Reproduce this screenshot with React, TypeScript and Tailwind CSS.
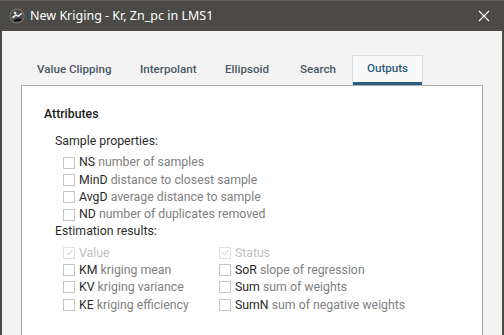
import React from "react";

type Item = { code: string; text: string; disabled?: boolean; checked?: boolean };

const sampleItems: Item[] = [
  { code: "NS", text: "number of samples" },
  { code: "MinD", text: "distance to closest sample" },
  { code: "AvgD", text: "average distance to sample" },
  { code: "ND", text: "number of duplicates removed" },
];

const leftItems: Item[] = [
  { code: "", text: "Value", disabled: true, checked: true },
  { code: "KM", text: "kriging mean" },
  { code: "KV", text: "kriging variance" },
  { code: "KE", text: "kriging efficiency" },
];

const rightItems: Item[] = [
  { code: "", text: "Status", disabled: true, checked: true },
  { code: "SoR", text: "slope of regression" },
  { code: "Sum", text: "sum of weights" },
  { code: "SumN", text: "sum of negative weights" },
];

function Check({ item }: { item: Item }) {
  return (
    <div className="flex h-[17.3px] items-center">
      <span
        className={`flex h-[12px] w-[12px] shrink-0 items-center justify-center border bg-white ${
          item.disabled ? "border-[#e0e0e0]" : "border-[#c4c4c4]"
        }`}
      >
        {item.checked ? (
          <svg width="9" height="9" viewBox="0 0 9 9" fill="none">
            <path d="M1.5 4.5 L3.5 6.8 L7.5 2" stroke="#c8c8c8" strokeWidth="1" />
          </svg>
        ) : null}
      </span>
      <span className="ml-[4px] whitespace-nowrap">
        {item.code ? <span className="text-[#2b2b2b]">{item.code} </span> : null}
        <span className={item.disabled ? "text-[#c0c0c0]" : "text-[#808080]"}>{item.text}</span>
      </span>
    </div>
  );
}

function TitleIcon() {
  return (
    <svg width="16" height="16" viewBox="0 0 16 16">
      <circle cx="8" cy="8" r="7.5" fill="#8a8a8a" />
      <circle cx="8" cy="8" r="6.8" fill="#4a4a4a" />
      <path d="M3 9 L7 6 L9 7.5 L12.5 4.5 L13 6 L9.5 9 L7 8 L4 10.5 Z" fill="#f0f0f0" />
      <path d="M4.5 12.5 Q8 9.5 12.5 11 L11 13.5 Q8 12.5 5.5 14 Z" fill="#0e0e0e" />
      <circle cx="6" cy="5" r="1.3" fill="#e8e8e8" />
    </svg>
  );
}

export default function App() {
  return (
    <div
      className="flex h-[335px] w-[504px] flex-col overflow-hidden bg-[#f3f3f3]"
      style={{ fontFamily: "Roboto, 'Liberation Sans', sans-serif" }}
    >
      <div className="flex h-[31px] shrink-0 items-center border-t border-[#5c5b58] bg-[#4b4a47] pl-[9px] pr-[14px]">
        <TitleIcon />
        <span
          className="ml-[5px] text-[12.5px] text-white"
          style={{ fontFamily: "'Noto Sans', 'Liberation Sans', sans-serif" }}
        >
          New Kriging - Kr, Zn_pc in LMS1
        </span>
        <svg className="ml-auto" width="12" height="12" viewBox="0 0 12 12">
          <path d="M1 1 L11 11 M11 1 L1 11" stroke="#ffffff" strokeWidth="1.1" />
        </svg>
      </div>
      <div className="flex min-h-0 flex-1 border-x-2 border-[#4b4a47]">
        <div className="flex min-h-0 flex-1 flex-col pl-[19px] pr-[19px]">
          <div className="flex h-[54px] shrink-0 items-end pl-[2px]">
            <div className="flex h-[30px] items-center text-[11.6px] font-medium text-[#4a5866]">
              <span className="ml-[14px] w-[103px]">Value Clipping</span>
              <span className="w-[85px]">Interpolant</span>
              <span className="w-[75px]">Ellipsoid</span>
              <span className="w-[52px]">Search</span>
            </div>
            <div className="flex h-[30px] w-[71px] flex-col border-x border-t border-[#dcdcdc] bg-[#f9f9f9]">
              <div className="flex flex-1 items-center justify-center text-[11.6px] font-medium text-[#2d5a80]">
                Outputs
              </div>
              <div className="h-[3px] bg-[#2a5d80]" />
            </div>
          </div>
          <div className="min-h-0 flex-1 border border-b-0 border-[#a9a9a9] bg-white pl-[22px] pt-[19px] text-[12.3px]">
            <div className="h-[18px] font-medium leading-[18px] text-[#1a1a1a]">Attributes</div>
            <div className="ml-[11px] mt-[9px]">
              <div className="h-[19px] leading-[19px] text-[#2b2b2b]">Sample properties:</div>
              <div className="ml-[8px] mt-[3px]">
                {sampleItems.map((it) => (
                  <Check key={it.code} item={it} />
                ))}
              </div>
              <div className="h-[17px] leading-[17px] text-[#2b2b2b]">Estimation results:</div>
              <div className="ml-[8px] mt-[4px] flex">
                <div className="w-[156px]">
                  {leftItems.map((it) => (
                    <Check key={it.text} item={it} />
                  ))}
                </div>
                <div>
                  {rightItems.map((it) => (
                    <Check key={it.text} item={it} />
                  ))}
                </div>
              </div>
            </div>
          </div>
        </div>
      </div>
    </div>
  );
}
